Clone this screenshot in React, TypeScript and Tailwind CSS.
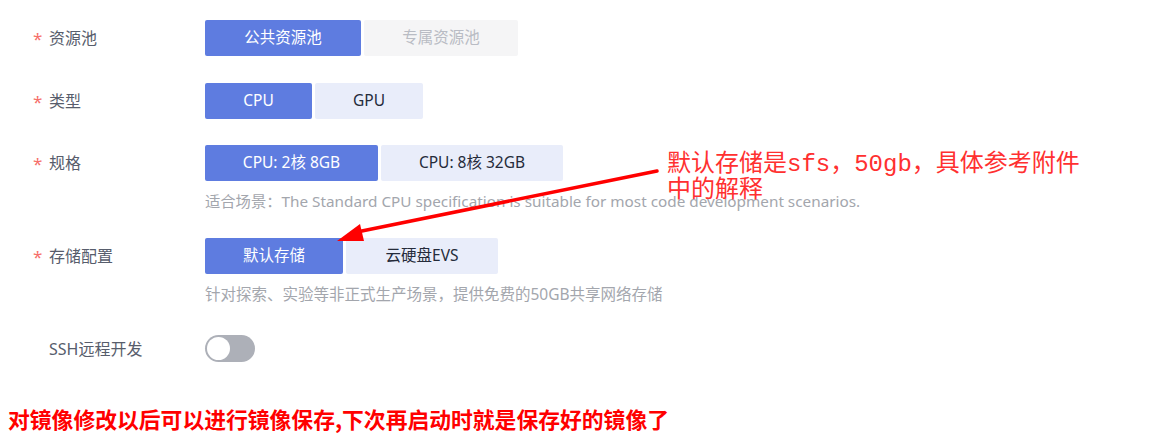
import React from "react";

const ui = { fontFamily: '"Noto Sans", "Noto Sans CJK SC", sans-serif' };

function Label({ text, required = true }: { text: string; required?: boolean }) {
  return (
    <div className="w-[172px] shrink-0 flex items-center text-[16px] text-[#575d6c] leading-none">
      <span className={`w-[16px] text-[#f66f6a] text-[17px] ${required ? "" : "invisible"}`}>*</span>
      <span>{text}</span>
    </div>
  );
}

function Btn({ text, w, active, disabled }: { text: string; w: string; active?: boolean; disabled?: boolean }) {
  const cls = active
    ? "bg-[#5e7ce0] text-white"
    : disabled
    ? "bg-[#f5f5f6] text-[#b9bcc4]"
    : "bg-[#e9edfa] text-[#252b3a]";
  return (
    <div className={`${w} h-[36px] flex items-center justify-center rounded-[2px] text-[15.5px] ${cls}`}>{text}</div>
  );
}

export default function App() {
  return (
    <div className="relative w-[1155px] h-[444px] bg-white overflow-hidden" style={ui}>
      <div className="pl-[33px] pt-[20px] flex flex-col">
        <div className="flex items-center h-[36px]">
          <Label text="资源池" />
          <div className="flex gap-[3px]">
            <Btn text="公共资源池" w="w-[156px]" active />
            <Btn text="专属资源池" w="w-[154px]" disabled />
          </div>
        </div>
        <div className="flex items-center h-[36px] mt-[27px]">
          <Label text="类型" />
          <div className="flex gap-[3px]">
            <Btn text="CPU" w="w-[107px]" active />
            <Btn text="GPU" w="w-[108px]" />
          </div>
        </div>
        <div className="flex items-center h-[36px] mt-[26px]">
          <Label text="规格" />
          <div className="flex gap-[3px]">
            <Btn text="CPU: 2核 8GB" w="w-[173px]" active />
            <Btn text="CPU: 8核 32GB" w="w-[182px]" />
          </div>
        </div>
        <div className="pl-[172px] mt-[10px] h-[20px] flex items-center text-[15.3px] text-[#a3a6ad] whitespace-nowrap">
          适合场景：The Standard CPU specification is suitable for most code development scenarios.
        </div>
        <div className="flex items-center h-[36px] mt-[27px]">
          <Label text="存储配置" />
          <div className="flex gap-[3px]">
            <Btn text="默认存储" w="w-[138px]" active />
            <Btn text="云硬盘EVS" w="w-[152px]" />
          </div>
        </div>
        <div className="pl-[172px] mt-[11px] h-[20px] flex items-center text-[15.5px] text-[#a3a6ad] whitespace-nowrap">
          针对探索、实验等非正式生产场景，提供免费的50GB共享网络存储
        </div>
        <div className="flex items-center h-[27px] mt-[30px]">
          <Label text="SSH远程开发" required={false} />
          <div className="w-[50px] h-[27px] rounded-full bg-[#adb0b8] flex items-center pl-[2px]">
            <div className="w-[23px] h-[23px] rounded-full bg-white" />
          </div>
        </div>
        <div
          className="-ml-[25px] mt-[46px] text-[21.8px] font-bold text-[#ff0000] leading-none whitespace-nowrap"
          style={{ fontFamily: '"Noto Sans CJK SC", sans-serif' }}
        >
          对镜像修改以后可以进行镜像保存,下次再启动时就是保存好的镜像了
        </div>
      </div>

      <svg className="absolute left-0 top-0 pointer-events-none" width="1155" height="444">
        <line x1="657" y1="171" x2="352" y2="233" stroke="#ff0000" strokeWidth="3.5" strokeLinecap="round" />
        <polygon points="337,241 360,224 364,241" fill="#ff0000" />
      </svg>

      <div
        className="absolute left-[667px] top-[152px] text-[24px] leading-[26px] text-[#ff3030] whitespace-nowrap"
        style={{ fontFamily: '"Liberation Mono", "Noto Sans CJK SC", monospace' }}
      >
        <div>默认存储是sfs，50gb，具体参考附件</div>
        <div>中的解释</div>
      </div>
    </div>
  );
}
